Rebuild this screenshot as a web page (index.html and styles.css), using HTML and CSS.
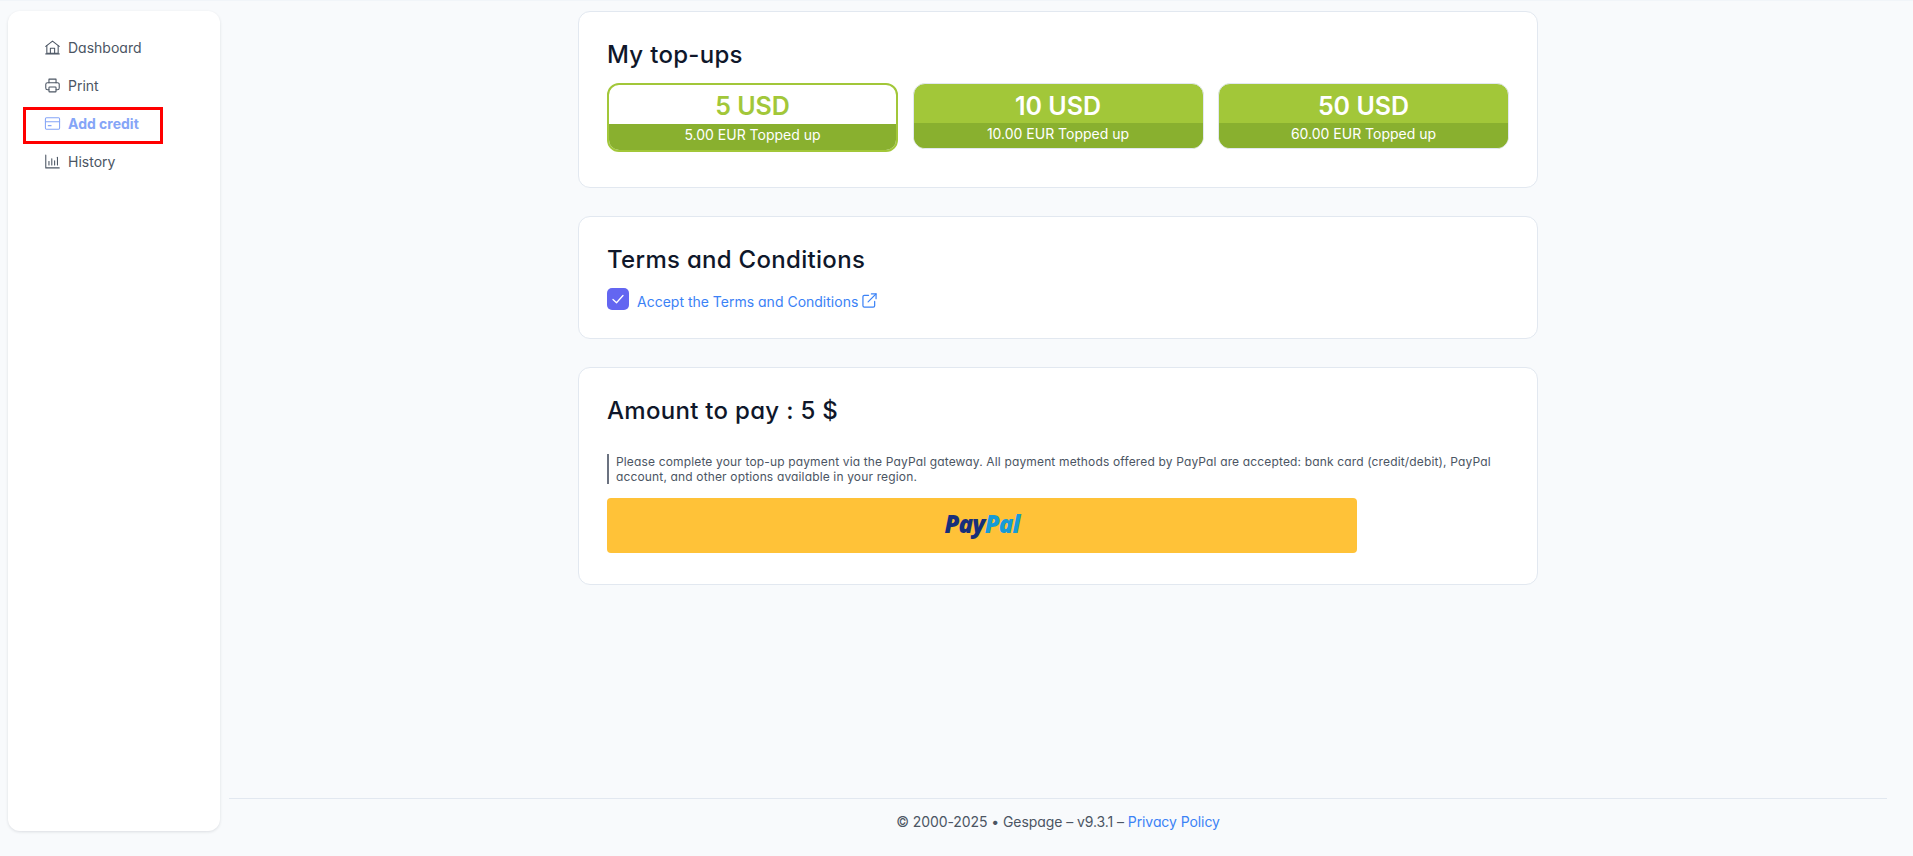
FILE: index.html
```html
<!DOCTYPE html>
<html lang="en">
<head>
    <meta charset="UTF-8">
    <meta name="viewport" content="width=device-width, initial-scale=1.0">
    <title>Add credit</title>
    <link rel="stylesheet" href="styles.css">
</head>
<body>
    <div class="page">
        <aside class="sidebar">
            <nav class="menu">
                <a class="menu-item" href="#">
                    <svg class="menu-icon" viewBox="0 0 24 24"><path d="M2.500 10.500 12 3l9.500 7.500"/><path d="M4 9.500V20h16V9.500"/><path d="M2.500 21h19"/><path d="M9 20v-7h6v7"/></svg>
                    <span>Dashboard</span>
                </a>
                <a class="menu-item" href="#">
                    <svg class="menu-icon" viewBox="0 0 24 24"><path d="M7 8V3h10v5"/><path d="M7 18H5a2.500 2.500 0 0 1-2.500-2.500v-5A2.500 2.500 0 0 1 5 8h14a2.500 2.500 0 0 1 2.500 2.500v5A2.500 2.500 0 0 1 19 18h-2"/><rect x="7" y="14" width="10" height="7" rx="1"/></svg>
                    <span>Print</span>
                </a>
                <a class="menu-item active" href="#">
                    <svg class="menu-icon" viewBox="0 0 24 24"><rect x="2" y="4" width="20" height="16" rx="1.500"/><path d="M2 9.500h20"/><path d="M6 15h4"/></svg>
                    <span>Add credit</span>
                    <span class="red-mark"></span>
                </a>
                <a class="menu-item" href="#">
                    <svg class="menu-icon" viewBox="0 0 24 24"><path d="M2.500 3v18h19"/><path d="M7 17v-5"/><path d="M11 17V8"/><path d="M15 17v-6"/><path d="M19 17V6"/></svg>
                    <span>History</span>
                </a>
            </nav>
        </aside>

        <div class="main">
            <div class="content">
                <section class="card">
                    <h2 class="card-title">My top-ups</h2>
                    <div class="topups">
                        <div class="topup selected">
                            <div class="topup-amount">5 USD</div>
                            <div class="topup-detail">5.00 EUR Topped up</div>
                        </div>
                        <div class="topup">
                            <div class="topup-amount">10 USD</div>
                            <div class="topup-detail">10.00 EUR Topped up</div>
                        </div>
                        <div class="topup">
                            <div class="topup-amount">50 USD</div>
                            <div class="topup-detail">60.00 EUR Topped up</div>
                        </div>
                    </div>
                </section>

                <section class="card terms-card">
                    <h2 class="card-title">Terms and Conditions</h2>
                    <div class="terms-row">
                        <span class="checkbox">
                            <svg viewBox="0 0 22 22"><path d="M6 11.500l3.500 3.200L16 7.500"/></svg>
                        </span>
                        <a class="terms-link" href="#">Accept the Terms and Conditions</a>
                        <svg class="ext-icon" viewBox="0 0 16 16"><path d="M7 2.500H2.500a1.500 1.500 0 0 0-1.500 1.500v9.500A1.500 1.500 0 0 0 2.500 15H12a1.500 1.500 0 0 0 1.500-1.500V9"/><path d="M6.500 9.500 15 1"/><path d="M10 1h5v5"/></svg>
                    </div>
                </section>

                <section class="card pay-card">
                    <h2 class="card-title">Amount to pay : 5 $</h2>
                    <p class="pay-note">Please complete your top-up payment via the PayPal gateway. All payment methods offered by PayPal are accepted: bank card (credit/debit), PayPal account, and other options available in your region.</p>
                    <button class="paypal-btn" type="button"><span class="pp-dark">Pay</span><span class="pp-light">Pal</span></button>
                </section>
            </div>

            <footer class="footer">
                © 2000-2025 • Gespage – v9.3.1 – <a href="#">Privacy Policy</a>
            </footer>
        </div>
    </div>
</body>
</html>
```

FILE: styles.css
```css
* {
    box-sizing: border-box;
}
body {
    margin: 0;
    background: #f8fafc;
    color: #4b5563;
    font-family: Inter, "Noto Sans", sans-serif;
    font-feature-settings: "cv11";
}
a {
    text-decoration: none;
}
.page {
    display: flex;
    height: 856px;
    border-top: 1px solid #f1f5f9;
    overflow: hidden;
}

/* sidebar */
.sidebar {
    flex: none;
    width: 212px;
    height: 820px;
    margin: 10px 0 0 8px;
    padding: 17px 15px;
    background: #fff;
    border-radius: 12px;
    box-shadow: 0 1px 3px rgba(15, 23, 42, 0.12);
}
.menu {
    display: flex;
    flex-direction: column;
}
.menu-item {
    position: relative;
    display: flex;
    align-items: center;
    gap: 7px;
    height: 38px;
    padding-left: 21px;
    color: #4b5563;
    font-size: 14px;
}
.menu-icon {
    width: 17px;
    height: 17px;
    fill: none;
    stroke: currentColor;
    stroke-width: 1.500;
    stroke-linecap: round;
    stroke-linejoin: round;
}
.menu-item.active {
    color: #85a5f7;
    font-weight: 700;
}
.red-mark {
    position: absolute;
    left: 0;
    top: 3px;
    width: 140px;
    height: 37px;
    border: 3px solid #f00;
}

/* main column */
.main {
    flex: 1;
    display: flex;
    flex-direction: column;
    align-items: center;
    margin: 0 26px 0 9px;
}
.content {
    width: 960px;
    padding-top: 10px;
}
.card {
    background: #fff;
    border: 1px solid #e2e8f0;
    border-radius: 12px;
    padding: 29px 28px 0;
    height: 177px;
    margin-bottom: 28px;
}
.terms-card {
    height: 123px;
}
.pay-card {
    height: 218px;
    margin-bottom: 0;
}
.card-title {
    margin: 0;
    color: #0f172a;
    font-size: 24px;
    font-weight: 450;
    line-height: 28px;
    letter-spacing: 0.3px;
}

/* top-up cards */
.topups {
    display: grid;
    grid-template-columns: repeat(3, 1fr);
    gap: 14.500px;
    align-items: start;
    margin-top: 14px;
}
.topup {
    overflow: hidden;
    background: #a2c739;
    border: 1px solid #e2e8f0;
    border-radius: 12px;
    color: #fff;
    text-align: center;
}
.topup-amount {
    height: 39px;
    font-size: 25px;
    font-weight: 600;
    line-height: 44px;
}
.topup-detail {
    height: 25px;
    background: #89b02f;
    font-size: 14px;
    line-height: 21px;
}
.topup.selected {
    background: #fff;
    border: 2px solid #a2c739;
    color: #a2c739;
}
.topup.selected .topup-amount {
    line-height: 43px;
}
.topup.selected .topup-detail {
    height: 26px;
    color: #fff;
    line-height: 22px;
}

/* terms */
.terms-row {
    display: flex;
    align-items: center;
    margin-top: 14px;
}
.checkbox {
    display: flex;
    width: 22px;
    height: 22px;
    margin-right: 8px;
    background: #6366f1;
    border-radius: 5px;
}
.checkbox svg {
    fill: none;
    stroke: #fff;
    stroke-width: 1.300;
    stroke-linecap: round;
    stroke-linejoin: round;
}
.terms-link {
    margin-top: 5px;
    color: #3b82f6;
    font-size: 14px;
}
.ext-icon {
    width: 15px;
    height: 15px;
    margin: 2px 0 0 4px;
    fill: none;
    stroke: #3b82f6;
    stroke-width: 1.300;
    stroke-linecap: round;
    stroke-linejoin: round;
}

/* payment */
.pay-note {
    margin: 29px 0 14px;
    padding-left: 7px;
    border-left: 2px solid #6b7280;
    color: #4b5563;
    font-size: 12px;
    line-height: 15px;
    letter-spacing: 0.15px;
}
.paypal-btn {
    display: block;
    width: 750px;
    height: 55px;
    padding: 0 0 4px;
    background: #ffc238;
    border: 0;
    border-radius: 4px;
    font-family: "Open Sans", sans-serif;
    font-size: 24px;
    font-style: italic;
    font-weight: 800;
    letter-spacing: -0.8px;
}
.pp-dark {
    color: #17307a;
}
.pp-light {
    color: #179bd7;
}

/* footer */
.footer {
    align-self: stretch;
    margin-top: auto;
    height: 58px;
    padding-top: 13px;
    border-top: 1px solid #e2e8f0;
    color: #4b5563;
    font-size: 14px;
    line-height: 20px;
    letter-spacing: -0.08px;
    text-align: center;
}
.footer a {
    color: #3b82f6;
}
```
